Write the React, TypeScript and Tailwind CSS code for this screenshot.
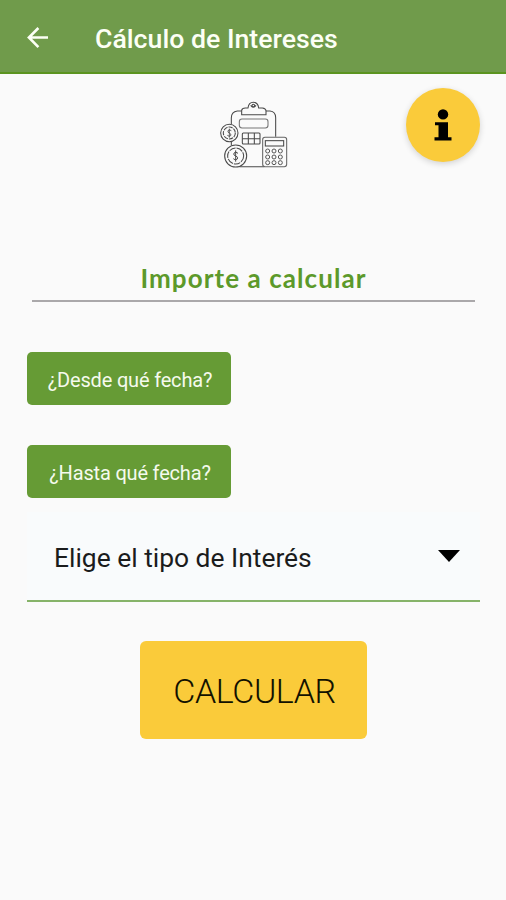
function BackArrow() {
  return (
    <svg className="h-[22px] w-[22px]" viewBox="0 0 22 22" fill="none" stroke="#fcfff5" strokeWidth="2.6">
      <path d="M21 10.5H2.5M11.4 1L1.9 10.5l9.5 9.6" />
    </svg>
  );
}

function FinanceIcon() {
  return (
    <svg className="h-[84px] w-[90px]" viewBox="0 0 270 252" fill="none" stroke="#4a4a4a" strokeWidth="3.2">
      <path d="M94 57H82Q64 59 64 78V97M64 150V160M88 224H163M168 57H180Q197 59 197 77V134" />
      <path d="M95 68V55Q96 48 106 48H114Q116 31 130 31Q144 31 146 48H157Q167 49 168 56V68Z" />
      <path d="M122 40Q130 50 138 40" />
      <circle cx="130" cy="41" r="4" />
      <rect x="88" y="81" width="86" height="27" rx="8" stroke="#777777" />
      <rect x="97" y="123" width="53" height="33" rx="3" />
      <path d="M97 140H150M115 123V156M133 123V156" />
      <circle cx="58" cy="123" r="26" />
      <circle cx="58" cy="123" r="18" strokeDasharray="13 3" />
      <path d="M64 116Q58 111 54 116Q52 121 58 123Q65 126 62 131Q58 135 52 130M58 110V137" strokeWidth="2.6" />
      <circle cx="77" cy="192" r="33" />
      <circle cx="77" cy="192" r="24" strokeDasharray="20 3" />
      <path d="M84 184Q77 177 72 183Q69 190 77 192Q86 195 82 201Q76 207 70 200M77 175V209" strokeWidth="3" />
      <rect x="158" y="136" width="72" height="88" rx="7" stroke="#666666" />
      <rect x="166" y="146" width="55" height="16" />
      <g stroke="#555555" strokeWidth="3">
        <circle cx="173" cy="177" r="6" /><circle cx="192" cy="177" r="6" /><circle cx="211" cy="177" r="6" />
        <circle cx="173" cy="195" r="6" /><circle cx="192" cy="195" r="6" /><circle cx="211" cy="195" r="6" />
        <circle cx="173" cy="212" r="6" /><circle cx="192" cy="212" r="6" /><circle cx="211" cy="212" r="6" />
      </g>
    </svg>
  );
}

function InfoButton() {
  return (
    <button
      aria-label="Información"
      className="absolute top-[14px] left-[406px] flex h-[74px] w-[74px] items-center justify-center rounded-full bg-[#facb3a] shadow-[0_2px_6px_rgba(0,0,0,0.16)]"
    >
      <svg className="h-8 w-[18px]" viewBox="0 0 18 32" fill="#000000">
        <circle cx="9" cy="5.4" r="5.2" />
        <path d="M1 13.2H14V28.3H17.5V31.5H.5V28.3H4.5V16.2H1Z" />
      </svg>
    </button>
  );
}

function DateButton({ label }: { label: string }) {
  return (
    <button className="flex h-[53px] w-[204px] items-center justify-center rounded-[5px] bg-[#669b35] pt-[3px] pl-[2px] text-[20px] tracking-[-0.18px] whitespace-nowrap text-[#f5faed]">
      {label}
    </button>
  );
}

export default function App() {
  return (
    <div className="flex h-[900px] w-[506px] flex-col overflow-hidden bg-[#fafafa] font-['Roboto',sans-serif]">
      <header className="flex h-[74px] shrink-0 items-center border-b-2 border-[#5b9420] bg-[#709b4b] pt-[4px] pl-[27px]">
        <BackArrow />
        <h1 className="ml-[46px] pt-[3px] text-[26.7px] font-medium whitespace-nowrap text-[#fcfff5]">Cálculo de Intereses</h1>
      </header>
      <main className="relative flex flex-col">
        <div className="flex h-[182px] pt-[18px] pl-[210px]">
          <FinanceIcon />
        </div>
        <InfoButton />
        <div className="mx-8 flex h-[46px] w-[443px] items-center justify-center border-b-2 border-[#aaa8aa] pt-px font-['Lato',sans-serif] text-[26px] font-bold tracking-[1.08px] whitespace-nowrap text-[#5c992a]">
          Importe a calcular
        </div>
        <div className="mt-[50px] ml-[27px] flex flex-col gap-10">
          <DateButton label="¿Desde qué fecha?" />
          <DateButton label="¿Hasta qué fecha?" />
        </div>
        <div className="mt-[14px] ml-[27px] flex h-[90px] w-[453px] items-center justify-between border-b-2 border-[#86b369] bg-[#f9fbfc] pt-1 pr-5 pl-[27px] text-[26.4px] text-[#1b1c1c]">
          <span className="pt-[2px] whitespace-nowrap">Elige el tipo de Interés</span>
          <svg className="-mt-1 h-3 w-[22px]" viewBox="0 0 22 12" fill="#000000">
            <path d="M0 0H22L11 12Z" />
          </svg>
        </div>
        <button className="mt-[39px] ml-[140px] flex h-[98px] w-[227px] items-center justify-center rounded-[6px] bg-[#facb3a] pt-[3px] pl-[2px] text-[34px] font-[350] tracking-[-0.4px] text-[#111100]">
          CALCULAR
        </button>
      </main>
    </div>
  );
}
